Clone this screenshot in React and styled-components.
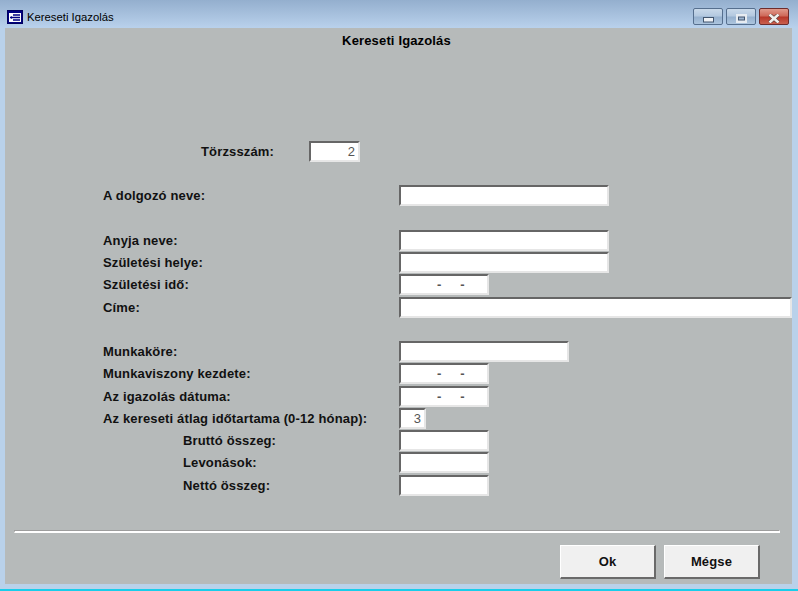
import styled, { createGlobalStyle } from "styled-components";

const GlobalStyle = createGlobalStyle`
    html, body {
        margin: 0;
        padding: 0;
        background: #b9d1ea;
    }
    body {
        font-family: "Liberation Sans", Arial, sans-serif;
    }
`;

const DATE_MASK = "-\u00a0\u00a0\u00a0\u00a0\u00a0-";

const App = () => {
    return (
        <Window>
            <GlobalStyle />
            <TitleBar>
                <AppIcon viewBox="0 0 16 14">
                    <rect x="0.5" y="0.5" width="15" height="13" fill="#fff" stroke="#000060" />
                    <rect x="1" y="1" width="14" height="2" fill="#000080" />
                    <rect x="1" y="3" width="1" height="10" fill="#000080" />
                    <rect x="14" y="3" width="1" height="10" fill="#000080" />
                    <rect x="1" y="12" width="14" height="1" fill="#000080" />
                    <path d="M6 5h7M3 7.5h10M6 10h7" stroke="#000080" strokeWidth="1.3" fill="none" />
                    <path d="M5 6L3 7.5 5 9z" fill="#000080" />
                </AppIcon>
                <WindowTitle>Kereseti Igazolás</WindowTitle>
                <WindowButtons>
                    <CaptionButton>
                        <CaptionGlyph width="11" height="6" viewBox="0 0 11 6" $top={7}>
                            <rect x="0.5" y="0.5" width="10" height="4.5" fill="#eef1f5" stroke="#42556e" />
                        </CaptionGlyph>
                    </CaptionButton>
                    <CaptionButton>
                        <CaptionGlyph width="11" height="9" viewBox="0 0 11 9" $top={3}>
                            <rect x="0.5" y="0.5" width="10" height="8" fill="#e6ebf1" stroke="#e6ebf1" />
                            <rect x="2.5" y="3" width="6" height="3" fill="#9db5d0" stroke="#42556e" />
                        </CaptionGlyph>
                    </CaptionButton>
                    <CaptionButton $close>
                        <CaptionGlyph width="12" height="9" viewBox="0 0 12 9" $top={3}>
                            <path d="M1.5 0.5l9 8M10.5 0.5l-9 8" stroke="#5a3a36" strokeWidth="3.8" />
                            <path d="M1.5 0.5l9 8M10.5 0.5l-9 8" stroke="#f1efec" strokeWidth="2.6" />
                        </CaptionGlyph>
                    </CaptionButton>
                </WindowButtons>
            </TitleBar>
            <Client>
                <Heading>Kereseti Igazolás</Heading>
                <Form>
                    <Row>
                        <Label $indent={98} $width={108}>Törzsszám:</Label>
                        <Field $width={51} $align="right">2</Field>
                    </Row>
                    <Row $top={22}>
                        <Label $width={296}>A dolgozó neve:</Label>
                        <Field $width={210} />
                    </Row>
                    <Row $top={23}>
                        <Label $width={296}>Anyja neve:</Label>
                        <Field $width={210} />
                    </Row>
                    <Row>
                        <Label $width={296}>Születési helye:</Label>
                        <Field $width={210} />
                    </Row>
                    <Row>
                        <Label $width={296}>Születési idő:</Label>
                        <DateField>{DATE_MASK}</DateField>
                    </Row>
                    <Row $top={1}>
                        <Label $width={296}>Címe:</Label>
                        <Field $width={393} />
                    </Row>
                    <Row $top={22}>
                        <Label $width={296}>Munkaköre:</Label>
                        <Field $width={170} />
                    </Row>
                    <Row>
                        <Label $width={296}>Munkaviszony kezdete:</Label>
                        <DateField>{DATE_MASK}</DateField>
                    </Row>
                    <Row $top={1}>
                        <Label $width={296}>Az igazolás dátuma:</Label>
                        <DateField>{DATE_MASK}</DateField>
                    </Row>
                    <Row>
                        <Label $width={296}>Az kereseti átlag időtartama (0-12 hónap):</Label>
                        <Field $width={27} $align="right">3</Field>
                    </Row>
                    <Row>
                        <Label $indent={80} $width={216}>Bruttó összeg:</Label>
                        <Field $width={90} />
                    </Row>
                    <Row>
                        <Label $indent={80} $width={216}>Levonások:</Label>
                        <Field $width={90} />
                    </Row>
                    <Row $top={1}>
                        <Label $indent={80} $width={216}>Nettó összeg:</Label>
                        <Field $width={90} />
                    </Row>
                </Form>
                <Divider />
                <Footer>
                    <Button>Ok</Button>
                    <Button>Mégse</Button>
                </Footer>
            </Client>
            <BottomEdge />
        </Window>
    );
};

const Window = styled.div`
    width: 798px;
    height: 591px;
    display: flex;
    flex-direction: column;
    overflow: hidden;
    background: #b9d1ea;
`;

const TitleBar = styled.div`
    height: 28px;
    flex: none;
    display: flex;
    align-items: flex-start;
    padding-left: 7px;
    box-sizing: border-box;
    background: linear-gradient(#94afce, #b9d1ec);
`;

const AppIcon = styled.svg`
    width: 16px;
    height: 14px;
    margin-top: 10px;
    flex: none;
`;

const WindowTitle = styled.div`
    margin: 9px 0 0 4px;
    font-size: 11.3px;
    line-height: 17px;
    color: #000;
`;

const WindowButtons = styled.div`
    margin-left: auto;
    margin-right: 9px;
    margin-top: 8px;
    display: flex;
    gap: 3px;
`;

const CaptionButton = styled.div`
    width: 30px;
    height: 17px;
    box-sizing: border-box;
    display: flex;
    align-items: center;
    justify-content: center;
    border: 1px solid ${(p) => (p.$close ? "#6e2c2c" : "#566f8e")};
    border-radius: 2px;
    background: ${(p) =>
        p.$close
            ? "linear-gradient(#e09a8c 0%, #cf6a5a 45%, #b8382a 55%, #c9604f 100%)"
            : "linear-gradient(#c9d9ea 0%, #b4c9e0 45%, #96b1cf 55%, #adc5de 100%)"};
`;

const CaptionGlyph = styled.svg`
    margin-top: ${(p) => p.$top}px;
`;

const Client = styled.div`
    margin: 0 6px 0 5px;
    height: 556px;
    flex: none;
    display: flex;
    flex-direction: column;
    background: #b6baba;
`;

const Heading = styled.div`
    height: 113px;
    padding: 5px 4px 0 0;
    box-sizing: border-box;
    text-align: center;
    font-size: 13px;
    line-height: 16px;
    font-weight: bold;
    letter-spacing: 0.15px;
    color: #000;
`;

const Form = styled.div`
    display: flex;
    flex-direction: column;
    padding-left: 98px;
`;

const Row = styled.div`
    display: flex;
    align-items: flex-start;
    height: 22px;
    margin-top: ${(p) => p.$top || 0}px;
`;

const Label = styled.div`
    box-sizing: border-box;
    width: ${(p) => p.$width + (p.$indent || 0)}px;
    padding-left: ${(p) => p.$indent || 0}px;
    flex: none;
    font-size: 13px;
    line-height: 21px;
    font-weight: bold;
    letter-spacing: 0.15px;
    color: #111;
    white-space: nowrap;
`;

const Field = styled.div`
    width: ${(p) => p.$width}px;
    height: 21px;
    flex: none;
    box-sizing: border-box;
    padding: 0 3px;
    background: #fff;
    border-style: solid;
    border-width: 2px;
    border-color: #666 #e6e6e6 #e6e6e6 #666;
    font-size: 13px;
    line-height: 17px;
    color: #555;
    text-align: ${(p) => p.$align || "left"};
    white-space: nowrap;
`;

const DateField = styled(Field).attrs({ $width: 90 })`
    padding-left: 36px;
    font-weight: bold;
    letter-spacing: 0.15px;
`;

const Divider = styled.div`
    margin: 33px 12px 0 9px;
    height: 3px;
    box-sizing: border-box;
    border-style: solid;
    border-width: 1px 1px 2px 1px;
    border-color: #9d9d9d #fff #fff #9d9d9d;
`;

const Footer = styled.div`
    display: flex;
    justify-content: flex-end;
    gap: 8px;
    margin-top: 12px;
    padding-right: 32px;
`;

const Button = styled.div`
    width: 96px;
    height: 34px;
    box-sizing: border-box;
    display: flex;
    align-items: center;
    justify-content: center;
    background: #f0f0f0;
    border-style: solid;
    border-width: 1px 2px 2px 1px;
    border-color: #fff #6a6a6a #6a6a6a #fff;
    font-size: 13px;
    font-weight: bold;
    letter-spacing: 0.15px;
    color: #111;
`;

const BottomEdge = styled.div`
    margin-top: auto;
    height: 2px;
    flex: none;
    background: #19cdea;
`;

export default App;
